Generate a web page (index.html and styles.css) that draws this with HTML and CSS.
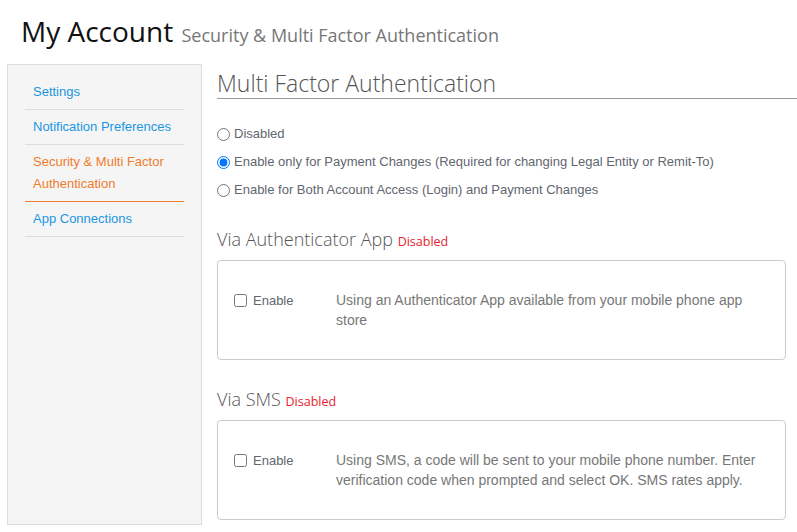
FILE: index.html
```html
<!DOCTYPE html>
<html lang="en">
<head>
<meta charset="utf-8">
<title>My Account</title>
<link rel="stylesheet" href="styles.css">
</head>
<body>
<header class="page-title">
  <h1>My Account <small>Security &amp; Multi Factor Authentication</small></h1>
</header>
<div class="layout">
  <nav class="sidebar">
    <ul class="nav-list">
      <li class="nav-item"><a href="#">Settings</a></li>
      <li class="nav-item"><a href="#">Notification Preferences</a></li>
      <li class="nav-item active"><a href="#">Security &amp; Multi Factor Authentication</a></li>
      <li class="nav-item"><a href="#">App Connections</a></li>
    </ul>
  </nav>
  <main class="content">
    <h2 class="section-title">Multi Factor Authentication</h2>
    <div class="radio-group">
      <label class="radio-row"><input type="radio" name="mfa"> Disabled</label>
      <label class="radio-row"><input type="radio" name="mfa" checked> Enable only for Payment Changes (Required for changing Legal Entity or Remit-To)</label>
      <label class="radio-row"><input type="radio" name="mfa"> Enable for Both Account Access (Login) and Payment Changes</label>
    </div>
    <h3 class="method-title">Via Authenticator App <span class="status">Disabled</span></h3>
    <div class="method-box">
      <label class="enable"><input type="checkbox"> Enable</label>
      <p class="desc">Using an Authenticator App available from your mobile phone app store</p>
    </div>
    <h3 class="method-title">Via SMS <span class="status">Disabled</span></h3>
    <div class="method-box last">
      <label class="enable"><input type="checkbox"> Enable</label>
      <p class="desc">Using SMS, a code will be sent to your mobile phone number. Enter verification code when prompted and select OK. SMS rates apply.</p>
    </div>
  </main>
</div>
</body>
</html>
```
FILE: styles.css
```css
html, body {
  margin: 0;
  padding: 0;
  background: #fff;
}
body {
  font-family: "Liberation Sans", Arial, sans-serif;
  font-size: 13px;
  color: #5f6670;
}
.page-title {
  padding: 11px 0 0 21px;
  margin-bottom: 13px;
}
.page-title h1 {
  margin: 0;
  font-family: "Open Sans", sans-serif;
  font-weight: 400;
  font-size: 28px;
  line-height: 40px;
  height: 40px;
  color: #111;
}
.page-title small {
  font-size: 18px;
  line-height: 1;
  color: #777;
  margin-left: 1px;
}
.layout {
  display: grid;
  grid-template-columns: 195px 1fr;
  column-gap: 15px;
  padding-left: 7px;
}
.sidebar {
  background: #f5f5f5;
  border: 1px solid #ddd;
  padding: 10px 17px 0 17px;
  box-sizing: border-box;
}
.nav-list {
  list-style: none;
  margin: 0;
  padding: 0;
}
.nav-item {
  border-bottom: 1px solid #ddd;
  padding: 6px 8px;
  line-height: 22px;
  font-size: 13px;
}
.nav-item a {
  color: #1a96e2;
  text-decoration: none;
}
.nav-item.active {
  border-bottom-color: #f07c2c;
}
.nav-item.active a {
  color: #f07c2c;
}
.content {
  padding-bottom: 5px;
}
.section-title {
  margin: 0;
  padding-top: 4px;
  font-family: "Open Sans", sans-serif;
  font-weight: 300;
  font-size: 23px;
  line-height: 30px;
  color: #555;
  border-bottom: 1px solid #999;
}
.radio-group {
  margin: 20px 0 22px;
}
.radio-row {
  display: flex;
  align-items: center;
  height: 28px;
  font-size: 13px;
  color: #5f6670;
}
.radio-row input {
  margin: 2px 4px 0 0;
  width: 13px;
  height: 13px;
}
.method-title {
  margin: 0 0 7px;
  font-family: "Open Sans", sans-serif;
  font-weight: 300;
  font-size: 18px;
  line-height: 28px;
  height: 28px;
  color: #555;
}
.status {
  font-family: "Open Sans", sans-serif;
  font-weight: 400;
  font-size: 12.5px;
  line-height: 1;
  color: #e8212e;
}
.method-box {
  display: grid;
  grid-template-columns: 102px 1fr;
  align-items: start;
  border: 1px solid #ccc;
  border-radius: 4px;
  padding: 29px 16px 29px 16px;
  margin: 0 11px 25px 0;
  min-height: 40px;
}
.method-box.last {
  margin-bottom: 0;
}
.enable {
  display: flex;
  align-items: center;
  height: 20px;
  font-size: 13px;
  color: #5f6670;
}
.enable input {
  margin: 0 6px 0 0;
  width: 13px;
  height: 13px;
}
.desc {
  margin: 0;
  font-size: 14px;
  line-height: 20px;
  color: #777;
}
```
